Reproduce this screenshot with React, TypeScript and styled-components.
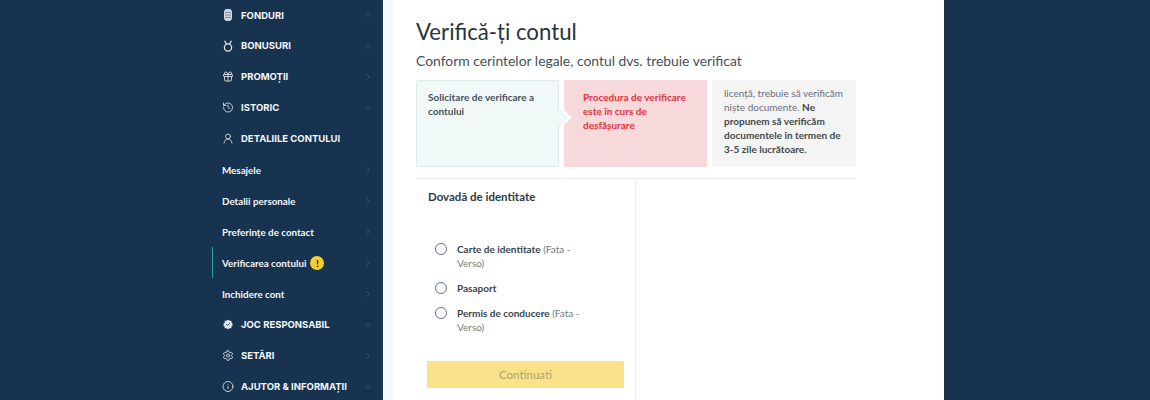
import React from 'react'
import styled, { createGlobalStyle } from 'styled-components'
import {
	BadgeCheck,
	ChevronRight,
	Gift,
	History,
	Info,
	Plus,
	Settings,
	UserRound,
} from 'lucide-react'

const GlobalStyle = createGlobalStyle`
	html, body {
		margin: 0;
		height: 400px;
		overflow: hidden;
		background: #17334f;
	}
`

const Page = styled.div`
	display: grid;
	grid-template-columns: 383px 10px 551px 206px;
	height: 400px;
	overflow: hidden;
	font-family: 'Lato', 'Liberation Sans', sans-serif;
`

const Sidebar = styled.nav`
	background: #17334f;
	padding-left: 212px;
	box-sizing: border-box;
	height: 400px;
	overflow: hidden;

	& > :first-child {
		height: 30px;
	}
`

const NavRow = styled.div<{ $active?: boolean }>`
	display: flex;
	align-items: center;
	height: 31px;
	padding-left: ${(p) => (p.$active ? '9px' : '10px')};
	padding-right: 10px;
	border-left: ${(p) => (p.$active ? '1px solid #1fa898' : 'none')};
	color: #f4f6f8;
`

const IconSlot = styled.span`
	display: flex;
	justify-content: center;
	width: 12px;
	margin-right: 7px;
	color: #dfe5ea;
`

const MainLabel = styled.span`
	font-family: 'Inter', 'Liberation Sans', sans-serif;
	font-size: 9.5px;
	font-weight: 700;
	white-space: nowrap;
`

const SubLabel = styled.span`
	font-size: 9.8px;
	font-weight: 700;
	white-space: nowrap;
`

const Warning = styled.span`
	display: inline-flex;
	align-items: center;
	justify-content: center;
	width: 14px;
	height: 14px;
	margin-left: 4px;
	border-radius: 50%;
	background: #f6cf2f;
	color: #17334f;
	font-size: 10px;
	font-weight: 900;
`

const Trailing = styled.span<{ $faint?: boolean }>`
	display: flex;
	justify-content: center;
	flex: none;
	width: 10px;
	margin-left: auto;
	color: ${(p) => (p.$faint ? '#4a6279' : '#6b8095')};
`

const Gutter = styled.div`
	background: #f3f8f9;
`

const Panel = styled.main`
	background: #ffffff;
	padding: 18px 88px 0 23px;
	color: #2d3a45;
	height: 400px;
	box-sizing: border-box;
	overflow: hidden;
`

const Title = styled.h1`
	margin: 0;
	font-size: 22.2px;
	line-height: 27px;
	font-weight: 400;
	color: #27343e;
`

const Subtitle = styled.h2`
	margin: 7px 0 0;
	font-size: 13.9px;
	line-height: 18px;
	font-weight: 400;
	color: #464f57;
`

const Steps = styled.div`
	display: grid;
	grid-template-columns: 143px 143px 144px;
	gap: 5px;
	margin-top: 10px;
	height: 87px;
`

const Step = styled.div<{ $tone: 'done' | 'current' | 'info' }>`
	position: relative;
	box-sizing: border-box;
	padding: ${(p) =>
		p.$tone === 'info' ? '6px 10px 0 12px' : p.$tone === 'current' ? '10px 12px 0 19px' : '9px 11px 0'};
	border-radius: 2px;
	font-size: 10px;
	line-height: 14px;
	font-weight: ${(p) => (p.$tone === 'info' ? 400 : 700)};
	background: ${(p) =>
		p.$tone === 'done' ? '#f1f8f8' : p.$tone === 'current' ? '#f8d9db' : '#f4f4f4'};
	color: ${(p) =>
		p.$tone === 'done' ? '#46525c' : p.$tone === 'current' ? '#e0343f' : '#6a7076'};
	border: ${(p) => (p.$tone === 'done' ? '1px solid #dcebe9' : 'none')};
`

const StepArrow = styled.span`
	position: absolute;
	right: -12px;
	top: 28px;
	width: 15px;
	height: 15px;
	background: #f1f8f8;
	border-top: 2px solid #ffffff;
	border-right: 2px solid #ffffff;
	transform: rotate(45deg) scale(0.82);
	z-index: 1;
`

const Strong = styled.b`
	color: #42494f;
`

const Columns = styled.div`
	display: grid;
	grid-template-columns: 220px 1fr;
	margin-top: 11px;
	border-top: 1px solid #e9ebed;
	height: 240px;
`

const FormColumn = styled.section`
	border-right: 1px solid #e9ebed;
	padding: 10px 11px 0 11px;
`

const FormTitle = styled.h3`
	margin: 0;
	padding-left: 1px;
	font-size: 11.5px;
	line-height: 15px;
	font-weight: 700;
	color: #2f3b46;
`

const RadioList = styled.div`
	display: flex;
	flex-direction: column;
	gap: 11px;
	margin-top: 38px;
`

const RadioRow = styled.label`
	display: flex;
	align-items: flex-start;
	padding-left: 8px;
	font-size: 10px;
	line-height: 14px;
	color: #757b81;
`

const RadioDot = styled.span`
	flex: none;
	box-sizing: border-box;
	width: 12px;
	height: 12px;
	margin-top: 1px;
	margin-right: 10px;
	border: 1px solid #68747e;
	border-radius: 50%;
`

const RadioText = styled.span`
	width: 132px;
	b {
		color: #3a444d;
	}
`

const SubmitButton = styled.button`
	display: block;
	width: 197px;
	height: 27px;
	margin-top: 27px;
	border: none;
	border-radius: 1px;
	background: #f9e28a;
	color: #aea26a;
	font-family: inherit;
	font-size: 11.5px;
`

const Backdrop = styled.div`
	background: #17334f;
`

const iconProps = { size: 13, strokeWidth: 1.7 }

const CoinStackIcon = () => (
	<svg width="8" height="12" viewBox="0 0 8 12">
		<rect x="0.6" y="0.6" width="6.8" height="10.8" rx="2" fill="#c9d2da" stroke="#dfe5ea" strokeWidth="1" />
		<path d="M1 3.5h6M1 6h6M1 8.5h6" stroke="#5d7287" strokeWidth="0.7" />
	</svg>
)

const MedalIcon = () => (
	<svg width="10" height="12" viewBox="0 0 10 12" fill="none" stroke="#dfe5ea" strokeWidth="1.3">
		<circle cx="5" cy="7.5" r="3.6" />
		<path d="M1.6 0.8 3.4 4M8.4 0.8 6.6 4" />
	</svg>
)

const mainItems = [
	{ label: 'FONDURI', icon: <CoinStackIcon />, open: true },
	{ label: 'BONUSURI', icon: <MedalIcon />, open: true },
	{ label: 'PROMOȚII', icon: <Gift {...iconProps} />, open: false },
	{ label: 'ISTORIC', icon: <History {...iconProps} />, open: true },
]

const subItems = ['Mesajele', 'Detalii personale', 'Preferințe de contact']

const MainRow = ({ label, icon, open, plain }: { label: string; icon: React.ReactNode; open?: boolean; plain?: boolean }) => (
	<NavRow>
		<IconSlot>{icon}</IconSlot>
		<MainLabel>{label}</MainLabel>
		{!plain && (
			<Trailing $faint={open}>
				{open ? <Plus size={10} strokeWidth={1} /> : <ChevronRight size={18} strokeWidth={1} />}
			</Trailing>
		)}
	</NavRow>
)

const SubRow = ({ label, active, warn }: { label: string; active?: boolean; warn?: boolean }) => (
	<NavRow $active={active}>
		<SubLabel>{label}</SubLabel>
		{warn && <Warning>!</Warning>}
		<Trailing>
			<ChevronRight size={18} strokeWidth={1} />
		</Trailing>
	</NavRow>
)

export default function App() {
	return (
		<>
			<GlobalStyle />
			<Page>
				<Sidebar>
					{mainItems.map((item) => (
						<MainRow key={item.label} {...item} />
					))}
					<MainRow label="DETALIILE CONTULUI" icon={<UserRound {...iconProps} />} plain />
					{subItems.map((label) => (
						<SubRow key={label} label={label} />
					))}
					<SubRow label="Verificarea contului" active warn />
					<SubRow label="Inchidere cont" />
					<MainRow label="JOC RESPONSABIL" icon={<BadgeCheck {...iconProps} fill="#dfe5ea" stroke="#17334f" />} open />
					<MainRow label="SETĂRI" icon={<Settings {...iconProps} />} />
					<MainRow label="AJUTOR & INFORMAȚII" icon={<Info {...iconProps} />} open />
				</Sidebar>
				<Gutter />
				<Panel>
					<Title>Verifică-ți contul</Title>
					<Subtitle>Conform cerintelor legale, contul dvs. trebuie verificat</Subtitle>
					<Steps>
						<Step $tone="done">
							Solicitare de verificare a contului
							<StepArrow />
						</Step>
						<Step $tone="current">Procedura de verificare este în curs de desfășurare</Step>
						<Step $tone="info">
							licență, trebuie să verificăm niște documente.{' '}
							<Strong>Ne propunem să verificăm documentele în termen de 3-5 zile lucrătoare.</Strong>
						</Step>
					</Steps>
					<Columns>
						<FormColumn>
							<FormTitle>Dovadă de identitate</FormTitle>
							<RadioList>
								<RadioRow>
									<RadioDot />
									<RadioText>
										<b>Carte de identitate</b> (Fata - Verso)
									</RadioText>
								</RadioRow>
								<RadioRow>
									<RadioDot />
									<RadioText>
										<b>Pasaport</b>
									</RadioText>
								</RadioRow>
								<RadioRow>
									<RadioDot />
									<RadioText>
										<b>Permis de conducere</b> (Fata - Verso)
									</RadioText>
								</RadioRow>
							</RadioList>
							<SubmitButton>Continuati</SubmitButton>
						</FormColumn>
					</Columns>
				</Panel>
				<Backdrop />
			</Page>
		</>
	)
}
